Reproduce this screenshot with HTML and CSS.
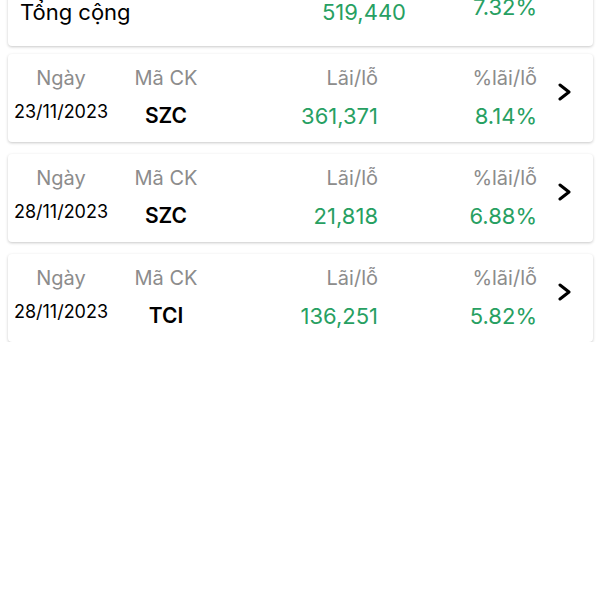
FILE: index.html
```html
<!DOCTYPE html>
<html lang="vi">
<head>
<meta charset="utf-8">
<link rel="stylesheet" href="styles.css">
</head>
<body>
<div class="list">
  <div class="card total">
    <div class="t-label">Tổng cộng</div>
    <div class="t-value green">519,440</div>
    <div class="t-pct green">7.32%</div>
  </div>

  <div class="card row">
    <div class="h c1">Ngày</div>
    <div class="h c2">Mã CK</div>
    <div class="h c3">Lãi/lỗ</div>
    <div class="h c4">%lãi/lỗ</div>
    <div class="chev"><svg width="16" height="18" viewBox="0 0 16 18"><path d="M3 2 L12 9 L3 16" fill="none" stroke="#000" stroke-width="3" stroke-linecap="round" stroke-linejoin="round"/></svg></div>
    <div class="date c1">23/11/2023</div>
    <div class="code c2">SZC</div>
    <div class="val c3 green">361,371</div>
    <div class="val c4 green">8.14%</div>
  </div>

  <div class="card row">
    <div class="h c1">Ngày</div>
    <div class="h c2">Mã CK</div>
    <div class="h c3">Lãi/lỗ</div>
    <div class="h c4">%lãi/lỗ</div>
    <div class="chev"><svg width="16" height="18" viewBox="0 0 16 18"><path d="M3 2 L12 9 L3 16" fill="none" stroke="#000" stroke-width="3" stroke-linecap="round" stroke-linejoin="round"/></svg></div>
    <div class="date c1">28/11/2023</div>
    <div class="code c2">SZC</div>
    <div class="val c3 green">21,818</div>
    <div class="val c4 green">6.88%</div>
  </div>

  <div class="card row">
    <div class="h c1">Ngày</div>
    <div class="h c2">Mã CK</div>
    <div class="h c3">Lãi/lỗ</div>
    <div class="h c4">%lãi/lỗ</div>
    <div class="chev"><svg width="16" height="18" viewBox="0 0 16 18"><path d="M3 2 L12 9 L3 16" fill="none" stroke="#000" stroke-width="3" stroke-linecap="round" stroke-linejoin="round"/></svg></div>
    <div class="date c1">28/11/2023</div>
    <div class="code c2">TCI</div>
    <div class="val c3 green">136,251</div>
    <div class="val c4 green">5.82%</div>
  </div>
</div>
</body>
</html>
```
FILE: styles.css
```css
html, body {
  margin: 0;
  padding: 0;
  background: #ffffff;
}
body {
  font-family: Inter, "Liberation Sans", Arial, sans-serif;
  color: #000;
}
.list {
  padding: 0 7px 0 8px;
  display: flex;
  flex-direction: column;
  gap: 12px;
}
.card {
  background: #fff;
  border-radius: 4px;
  box-shadow: 0 1px 3px rgba(0, 0, 0, 0.22);
}
.green { color: #27a062; }

.total {
  margin-top: -20px;
  margin-bottom: -4px;
  height: 66px;
  display: grid;
  grid-template-columns: 280px 118px 131px;
  align-items: start;
  padding-top: 19px;
  box-sizing: border-box;
}
.t-label {
  font-size: 22px;
  line-height: 26px;
  padding-left: 12px;
}
.t-value {
  font-size: 22px;
  line-height: 26px;
  text-align: right;
}
.t-pct {
  font-size: 22px;
  line-height: 26px;
  text-align: right;
  margin-top: -5px;
}

.row {
  height: 88px;
  box-sizing: border-box;
  padding-top: 12px;
  display: grid;
  grid-template-columns: 106px 104px 160px 159px 56px;
  grid-template-rows: 24px 26px;
  row-gap: 13px;
  align-items: start;
}
.c1 { grid-column: 1; text-align: center; }
.c2 { grid-column: 2; text-align: center; }
.c3 { grid-column: 3; text-align: right; }
.c4 { grid-column: 4; text-align: right; }
.h {
  grid-row: 1;
  font-size: 20px;
  line-height: 24px;
  color: #8c8c8c;
}
.date {
  grid-row: 2;
  font-size: 18px;
  line-height: 18px;
}
.code {
  grid-row: 2;
  font-size: 21px;
  line-height: 26px;
  font-weight: 600;
}
.val {
  grid-row: 2;
  font-size: 22px;
  line-height: 26px;
}
.chev {
  grid-column: 5;
  grid-row: 1 / span 2;
  display: flex;
  justify-content: center;
  margin-top: 17px;
}
.chev svg { display: block; }
```
